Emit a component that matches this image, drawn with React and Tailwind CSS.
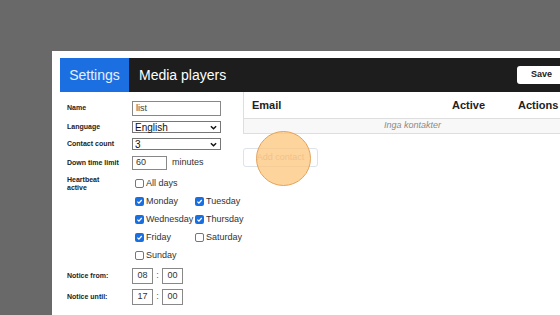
import React from "react";

const FONT = { fontFamily: '"Liberation Sans", Arial, sans-serif' };

function Box({ checked }) {
  if (checked) {
    return (
      <span className="w-[9px] h-[9px] rounded-[2px] bg-[#1a6fe0] flex items-center justify-center shrink-0">
        <svg width="7" height="7" viewBox="0 0 10 10">
          <path d="M2 5.2 L4.2 7.3 L8.2 2.8" stroke="white" strokeWidth="1.8" fill="none" />
        </svg>
      </span>
    );
  }
  return <span className="w-[9px] h-[9px] rounded-[2px] border border-[#767676] bg-white shrink-0" />;
}

function Day({ label, checked }) {
  return (
    <div className="flex items-center gap-[2px] w-[60px] h-[10px] leading-none text-[9px] text-[#333]">
      <Box checked={checked} />
      <span>{label}</span>
    </div>
  );
}

function Label({ children }) {
  return <div className="w-[65px] shrink-0 text-[7px] font-bold text-[#222]">{children}</div>;
}

function Select({ value }) {
  return (
    <div className="w-[89px] h-[12px] border border-[#777] flex items-center justify-between pl-[2px] pr-[3px] text-[10px] text-[#111]">
      <span>{value}</span>
      <svg width="7" height="5" viewBox="0 0 8 5">
        <path d="M1 1 L4 4 L7 1" stroke="#111" strokeWidth="1.6" fill="none" />
      </svg>
    </div>
  );
}

function TimeBox({ value }) {
  return (
    <div className="w-[21px] h-[16px] border border-[#888] flex items-center justify-center text-[9px] text-[#333]">
      {value}
    </div>
  );
}

export default function App() {
  return (
    <div className="relative w-[560px] h-[315px] overflow-hidden bg-[#696969] pl-[52px] pt-[51px]" style={FONT}>
      <div className="w-[528px] h-[300px] bg-white pt-[7px] pl-[8px]">
        {/* header bar */}
        <div className="h-[34px] bg-[#1d1d1d] flex items-center">
          <div className="h-full w-[69px] bg-[#1c6fe1] flex items-center justify-center text-[14px] text-[#e6efff]">
            Settings
          </div>
          <div className="pl-[10px] text-[14px] text-white">Media players</div>
          <div className="ml-auto mr-[10px] h-[18px] w-[53px] bg-white rounded-[3px] flex items-center pl-[14px] text-[9px] font-bold text-[#222]">
            Save
          </div>
        </div>

        <div className="flex">
          {/* left settings panel */}
          <div className="w-[183px] pl-[7px] pt-[9px]">
            <div className="flex items-center h-[15px]">
              <Label>Name</Label>
              <div className="w-[89px] h-[15px] border border-[#888] pl-[3px] flex items-center text-[9px] text-[#444]">list</div>
            </div>
            <div className="flex items-center h-[12px] mt-[5px]">
              <Label>Language</Label>
              <Select value="English" />
            </div>
            <div className="flex items-center h-[12px] mt-[5px]">
              <Label>Contact count</Label>
              <Select value="3" />
            </div>
            <div className="flex items-center h-[14px] mt-[6px]">
              <Label>Down time limit</Label>
              <div className="w-[35px] h-[14px] border border-[#888] pl-[3px] flex items-center text-[9px] text-[#333]">60</div>
              <span className="ml-[5px] text-[9px] text-[#333]">minutes</span>
            </div>
            <div className="flex mt-[3px]">
              <div className="w-[65px] shrink-0 pt-[3px] text-[7px] font-bold text-[#222] leading-[8px]">
                Heartbeat<br />active
              </div>
              <div className="pl-[3px] pt-[5px] flex flex-col gap-[8px]">
                <Day label="All days" />
                <div className="flex"><Day label="Monday" checked /><Day label="Tuesday" checked /></div>
                <div className="flex"><Day label="Wednesday" checked /><Day label="Thursday" checked /></div>
                <div className="flex"><Day label="Friday" checked /><Day label="Saturday" /></div>
                <Day label="Sunday" />
              </div>
            </div>
            <div className="flex items-center mt-[8px]">
              <Label>Notice from:</Label>
              <TimeBox value="08" />
              <span className="w-[9px] text-center text-[9px] text-[#555]">:</span>
              <TimeBox value="00" />
            </div>
            <div className="flex items-center mt-[5px]">
              <Label>Notice until:</Label>
              <TimeBox value="17" />
              <span className="w-[9px] text-center text-[9px] text-[#555]">:</span>
              <TimeBox value="00" />
            </div>
          </div>

          {/* contacts table */}
          <div>
            <div className="w-[338px] border-l border-[#dedede]">
              <div className="h-[26px] grid grid-cols-[200px_66px_1fr] items-center text-[11px] font-bold text-[#222]">
                <div className="pl-[8px]">Email</div>
                <div className="pl-[8px]">Active</div>
                <div className="pl-[8px]">Actions</div>
              </div>
              <div className="h-[16px] bg-[#f8f8f8] border-y border-[#dedede] flex items-center justify-center text-[9px] italic text-[#8a8a8a]">
                Inga kontakter
              </div>
            </div>
            <div className="mt-[14px] w-[75px] h-[19px] border border-[#dce3ea] rounded-[3px] flex items-center justify-center text-[9px] text-[#b5b5b5]">
              Add contact
            </div>
          </div>
        </div>
      </div>

      {/* click highlight */}
      <div className="absolute left-[256px] top-[131px] w-[55px] h-[55px] rounded-full bg-[#fdc67c]/75 border border-[#e3a35c]" />
    </div>
  );
}
